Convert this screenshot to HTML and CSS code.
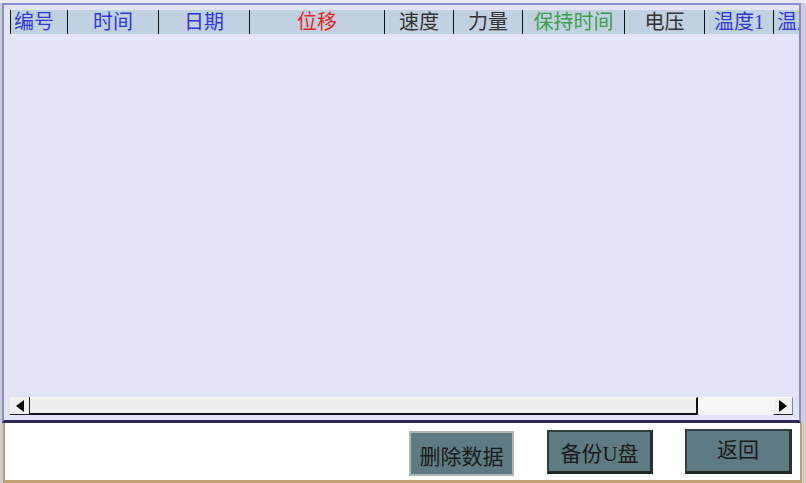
FILE: index.html
```html
<!DOCTYPE html>
<html>
<head>
<meta charset="utf-8">
<link rel="stylesheet" href="styles.css">
</head>
<body>
<div class="screen">
  <div class="main">
    <div class="header">
      <div class="col c1 left blue">编号</div>
      <div class="col c2 blue">时间</div>
      <div class="col c3 blue">日期</div>
      <div class="col c4 red">位移</div>
      <div class="col c5 dark">速度</div>
      <div class="col c6 dark">力量</div>
      <div class="col c7 green">保持时间</div>
      <div class="col c8 dark">电压</div>
      <div class="col c9 blue">温度1</div>
      <div class="col c10 left blue">温度2</div>
    </div>
    <div class="grid"></div>
    <div class="hscroll">
      <div class="sb-btn sb-left"><svg width="8" height="12" viewBox="0 0 8 12"><polygon points="8,0 8,12 0,6" fill="#000"/></svg></div>
      <div class="thumb"></div>
      <div class="track"></div>
      <div class="sb-btn sb-right"><svg width="8" height="12" viewBox="0 0 8 12"><polygon points="0,0 0,12 8,6" fill="#000"/></svg></div>
    </div>
  </div>
  <div class="bottom">
    <div class="btn btn-light b1">删除数据</div>
    <div class="btn btn-dark b2">备份U盘</div>
    <div class="btn btn-dark b3">返回</div>
  </div>
</div>
</body>
</html>
```
FILE: styles.css
```css
html, body {
  margin: 0;
  padding: 0;
}
body {
  width: 806px;
  height: 483px;
  overflow: hidden;
  background: #cdcdd6;
  font-family: "Liberation Serif", "Noto Sans CJK SC", serif;
}
.screen {
  padding-top: 3px;
  padding-left: 2px;
  background: linear-gradient(#e9e9f1, #e9e9f1) top left / 100% 3px no-repeat;
}
.main {
  box-sizing: border-box;
  width: 799px;
  height: 420px;
  border: 2px solid #8a8ad2;
  border-bottom: 3px solid #2c2a54;
  background: #e4e4f8;
  display: flex;
  flex-direction: column;
  overflow: hidden;
}
.header {
  margin: 5px 0 0 6px;
  height: 24px;
  display: flex;
  background: #c2d1e1;
  flex-shrink: 0;
}
.col {
  box-sizing: border-box;
  height: 24px;
  border-left: 1px solid #111;
  font-size: 20px;
  line-height: 24px;
  text-align: center;
  white-space: nowrap;
  overflow: hidden;
  flex-shrink: 0;
}
.col.left { text-align: left; padding-left: 3px; }
.c1 { width: 57px; }
.c2 { width: 91px; }
.c3 { width: 91px; }
.c4 { width: 135px; }
.c5 { width: 69px; }
.c6 { width: 69px; }
.c7 { width: 102px; }
.c8 { width: 80px; }
.c9 { width: 69px; }
.c10 { width: 69px; }
.blue { color: #3038d8; }
.red { color: #e42626; }
.dark { color: #333333; }
.green { color: #3aa04a; }
.grid { flex: 1; }
.hscroll {
  margin: 0 6px 5px 6px;
  height: 18px;
  display: flex;
  flex-shrink: 0;
}
.sb-btn {
  box-sizing: border-box;
  width: 20px;
  height: 18px;
  background: #f0f0f0;
  display: flex;
  align-items: center;
  justify-content: center;
}
.sb-left {
  border-right: 1px solid #222;
  border-bottom: 1px solid #222;
}
.sb-right {
  border-top: 1px solid #fafafa;
  border-left: 1px solid #fafafa;
  border-bottom: 1px solid #222;
  border-right: 1px solid #888;
}
.thumb {
  box-sizing: border-box;
  width: 668px;
  height: 18px;
  background: #eeeeee;
  border-top: 1px solid #f8f8f8;
  border-right: 2px solid #111;
  border-bottom: 2px solid #111;
}
.track {
  flex: 1;
  background: #f7f7f7;
}
.bottom {
  box-sizing: border-box;
  margin-left: 1px;
  width: 799px;
  height: 60px;
  background: #ffffff;
  border-left: 2px solid #bd9d6c;
  border-right: 2px solid #bd9d6c;
  border-bottom: 3px solid #c2a474;
  display: flex;
  justify-content: flex-end;
  align-items: flex-start;
  padding-right: 8px;
}
.btn {
  box-sizing: border-box;
  background: #5e7a82;
  color: #1a1a1a;
  font-size: 21px;
  display: flex;
  align-items: center;
  justify-content: center;
}
.btn-light {
  border: 2px solid #b2b4b4;
}
.btn-dark {
  border: 2px solid #34403f;
  border-bottom: 3px solid #1f2727;
  border-right: 3px solid #26302f;
}
.b1 {
  width: 105px;
  height: 45px;
  margin-top: 8px;
  padding-top: 2px;
}
.b2 {
  width: 106px;
  height: 44px;
  margin-top: 7px;
  margin-left: 33px;
}
.b3 {
  width: 107px;
  height: 45px;
  margin-top: 6px;
  margin-left: 32px;
  padding-bottom: 6px;
}
```
